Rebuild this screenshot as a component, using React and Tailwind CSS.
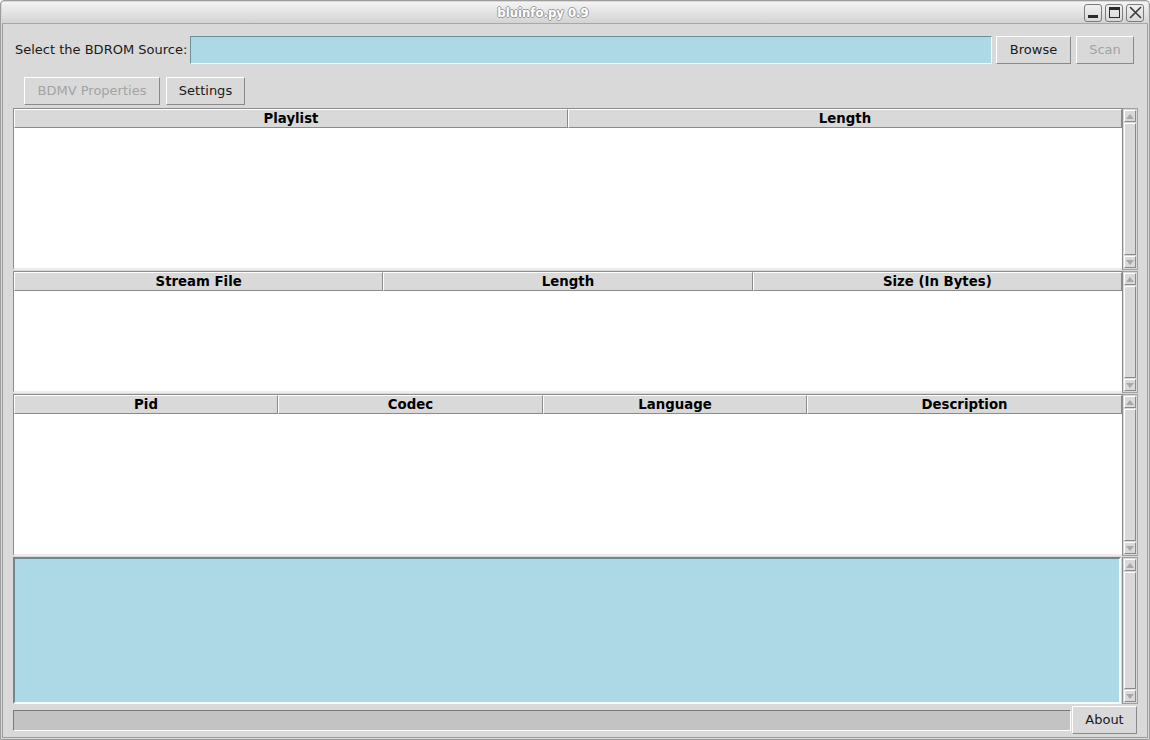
import React from "react";

const FONT = { fontFamily: '"DejaVu Sans", "Liberation Sans", sans-serif' };

function Btn({ children, disabled, className = "" }) {
  return (
    <div
      className={
        "h-[28px] flex items-center justify-center border border-t-white border-l-white border-r-[#8a8a8a] border-b-[#8a8a8a] bg-[#d9d9d9] text-[13px] " +
        (disabled ? "text-[#a3a3a3] " : "text-[#1a1a1a] ") +
        className
      }
    >
      {children}
    </div>
  );
}

function Arrow({ up }) {
  return (
    <div className="h-[12px] flex items-center justify-center border border-t-white border-l-white border-r-[#8a8a8a] border-b-[#8a8a8a] shrink-0">
      {up ? (
        <div className="w-0 h-0 border-x-[4px] border-x-transparent border-b-[5px] border-b-[#a8a8a8]" />
      ) : (
        <div className="w-0 h-0 border-x-[4px] border-x-transparent border-t-[5px] border-t-[#a8a8a8]" />
      )}
    </div>
  );
}

function Scrollbar() {
  return (
    <div className="w-[16px] shrink-0 flex flex-col border-l border-l-[#8a8a8a] border-r border-r-[#a0a0a0] border-y border-y-[#a0a0a0] bg-[#d9d9d9] px-px py-px gap-[1px]">
      <Arrow up />
      <div className="flex-1 border border-t-white border-l-white border-r-[#8a8a8a] border-b-[#8a8a8a]" />
      <Arrow />
    </div>
  );
}

function HeaderCell({ children, className = "" }) {
  return (
    <div
      className={
        "h-[19px] flex items-center justify-center border-t border-l border-t-white border-l-white border-r border-b border-r-[#8a8a8a] border-b-[#8a8a8a] text-[13.3px] font-bold text-black leading-none " +
        className
      }
    >
      {children}
    </div>
  );
}

function Tree({ height, children }) {
  return (
    <div className={"flex " + height}>
      <div className="flex-1 flex flex-col border-t border-l border-t-[#8c8c8c] border-l-[#8c8c8c] border-b-2 border-b-[#ececec] bg-white">
        <div className="flex bg-[#d9d9d9]">{children}</div>
        <div className="flex-1 bg-white" />
      </div>
      <Scrollbar />
    </div>
  );
}

export default function App() {
  return (
    <div
      style={FONT}
      className="w-[1150px] h-[740px] bg-[#d9d9d9] border border-[#9c9c9c] rounded-t-[4px] p-px flex flex-col overflow-hidden"
    >
      {/* Title bar */}
      <div className="h-[22px] shrink-0 bg-gradient-to-b from-[#f4f4f4] to-[#d3d3d3] border-b border-[#a8a8a8] flex items-center pr-[4px]">
        <div className="flex-1 flex items-center justify-center">
          <span
            className="text-[13px] font-bold text-white [text-shadow:1px_0_0_#9a9a9a,-1px_0_0_#9a9a9a,0_1px_0_#9a9a9a,0_-1px_0_#9a9a9a]"
            style={{ fontFamily: '"DejaVu Sans Condensed", "DejaVu Sans", sans-serif', fontStretch: "condensed" }}
          >
            bluinfo.py 0.9
          </span>
        </div>
        <div className="flex gap-[3px]">
          <div className="w-[18px] h-[18px] rounded-[3px] border border-[#7c7c7c] bg-gradient-to-b from-[#f0f0f0] to-[#d8d8d8] flex items-end justify-center pb-[3px]">
            <div className="w-[10px] h-[3px] bg-[#2a2a2a]" />
          </div>
          <div className="w-[18px] h-[18px] rounded-[3px] border border-[#7c7c7c] bg-gradient-to-b from-[#f0f0f0] to-[#d8d8d8] flex items-center justify-center">
            <div className="w-[11px] h-[11px] border border-[#2a2a2a] border-t-[3px]" />
          </div>
          <div className="w-[18px] h-[18px] rounded-[3px] border border-[#7c7c7c] bg-gradient-to-b from-[#f0f0f0] to-[#d8d8d8] flex items-center justify-center">
            <svg width="13" height="13" viewBox="0 0 13 13">
              <path d="M1 1 L12 12 M12 1 L1 12" stroke="#3a3a3a" strokeWidth="1.6" />
            </svg>
          </div>
        </div>
      </div>

      {/* Content */}
      <div className="flex-1 border-x border-b border-[#9c9c9c] flex flex-col pl-[10px] pr-[9px] pt-[12px]">
        {/* Row 1 */}
        <div className="flex items-center h-[28px]">
          <span className="text-[13px] text-[#1a1a1a] ml-[2px] mr-[3px] whitespace-nowrap">
            Select the BDROM Source:
          </span>
          <div className="flex-1 h-[28px] bg-[#add8e6] border border-t-[#6f8f96] border-l-[#6f8f96] border-b-[#f0fcff] border-r-[#f0fcff]" />
          <Btn className="w-[75px] ml-[4px]">Browse</Btn>
          <Btn disabled className="w-[58px] ml-[5px] mr-[4px]">Scan</Btn>
        </div>

        {/* Row 2 */}
        <div className="flex items-center mt-[13px] ml-[11px] gap-[6px]">
          <Btn disabled className="w-[136px]">BDMV Properties</Btn>
          <Btn className="w-[79px]">Settings</Btn>
        </div>

        {/* Trees */}
        <div className="mt-[3px] flex flex-col gap-[1px]">
          <Tree height="h-[162px]">
            <HeaderCell className="flex-1">Playlist</HeaderCell>
            <HeaderCell className="flex-1">Length</HeaderCell>
          </Tree>
          <Tree height="h-[122px]">
            <HeaderCell className="flex-1">Stream File</HeaderCell>
            <HeaderCell className="flex-1">Length</HeaderCell>
            <HeaderCell className="flex-1">Size (In Bytes)</HeaderCell>
          </Tree>
          <Tree height="h-[162px]">
            <HeaderCell className="w-[264px]">Pid</HeaderCell>
            <HeaderCell className="w-[265px]">Codec</HeaderCell>
            <HeaderCell className="w-[264px]">Language</HeaderCell>
            <HeaderCell className="flex-1">Description</HeaderCell>
          </Tree>
        </div>

        {/* Text area */}
        <div className="flex h-[147px] mt-[1px] gap-[1px]">
          <div className="flex-1 bg-[#add8e6] border-2 border-t-[#6a8990] border-l-[#6a8990] border-b-[#f0fcff] border-r-[#f0fcff]" />
          <Scrollbar />
        </div>

        {/* Bottom row */}
        <div className="flex items-center mt-[2px] h-[28px]">
          <div className="flex-1 h-[21px] bg-[#c3c3c3] border border-t-[#7a7a7a] border-l-[#7a7a7a] border-b-white border-r-white" />
          <Btn className="w-[65px] ml-[1px] mr-[1px]">About</Btn>
        </div>
      </div>
    </div>
  );
}
